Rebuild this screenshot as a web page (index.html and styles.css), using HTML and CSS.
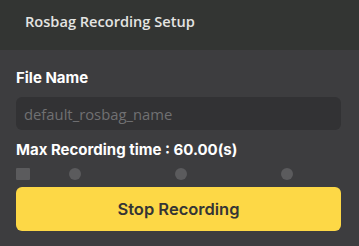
FILE: index.html
```html
<!DOCTYPE html>
<html>
<head>
<meta charset="utf-8">
<link rel="stylesheet" href="styles.css">
</head>
<body>
<header class="header">Rosbag Recording Setup</header>
<main class="content">
  <div class="label">File Name</div>
  <div class="input"><span class="placeholder">default_rosbag_name</span></div>
  <div class="label label-time">Max Recording time : 60.00(s)</div>
  <div class="slider">
    <span class="thumb"></span>
    <span class="dot"></span>
    <span class="dot"></span>
    <span class="dot"></span>
  </div>
  <button class="btn">Stop Recording</button>
</main>
</body>
</html>
```
FILE: styles.css
```css
html, body {
  margin: 0;
  padding: 0;
  width: 359px;
  height: 246px;
  overflow: hidden;
  background: #3d3d3f;
}
.header {
  height: 50px;
  box-sizing: border-box;
  background: #333533;
  color: #e4e4e2;
  font-family: "Open Sans", "DejaVu Sans", sans-serif;
  font-size: 14.6px;
  font-weight: 600;
  padding: 11px 0 0 25px;
  line-height: 20px;
}
.content {
  padding: 18px 18px 0 16px;
  display: flex;
  flex-direction: column;
  font-family: Inter, "Noto Sans", sans-serif;
}
.label {
  color: #ffffff;
  font-weight: 700;
  font-size: 15px;
  line-height: 20px;
  height: 20px;
}
.input {
  margin-top: 9px;
  height: 33px;
  background: #323234;
  border-radius: 6px;
  display: flex;
  align-items: center;
  padding-left: 8px;
}
.placeholder {
  color: #707072;
  font-family: "Open Sans", "DejaVu Sans", sans-serif;
  font-size: 14.8px;
}
.label-time {
  margin-top: 10px;
}
.slider {
  margin-top: 7px;
  height: 13px;
  position: relative;
  display: flex;
  align-items: center;
}
.thumb {
  width: 14px;
  height: 12px;
  background: #5b5b5d;
  border-radius: 1px;
}
.dot {
  width: 12px;
  height: 12px;
  border-radius: 50%;
  background: #5b5b5d;
}
.thumb + .dot { margin-left: 39px; }
.dot + .dot { margin-left: 94px; }
.btn {
  margin-top: 7px;
  height: 44px;
  border: none;
  border-radius: 6px;
  background: #fdd846;
  color: #353535;
  font-family: Inter, "Noto Sans", sans-serif;
  font-weight: 600;
  font-size: 16.5px;
  padding: 0;
  width: 100%;
}
```
